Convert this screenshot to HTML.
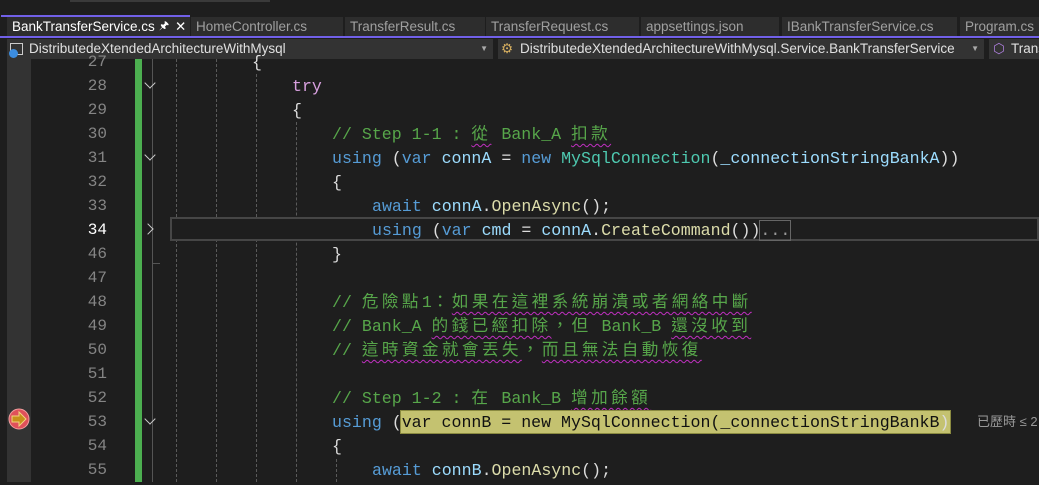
<!DOCTYPE html>
<html><head><meta charset="utf-8"><style>
*{margin:0;padding:0;box-sizing:border-box}
body{width:1039px;height:482px;background:#1e1e1e;overflow:hidden;position:relative;font-family:"Liberation Sans","Noto Sans CJK TC",sans-serif}
.tab{position:absolute;top:17px;height:19px;background:#2d2d2d;color:#a0a0a0;font-size:13.5px;line-height:19px;padding-left:5px;white-space:nowrap;overflow:hidden}
.nav{position:absolute;top:39px;height:20px;background:#333;color:#e0e0e0;font-size:13.5px;line-height:20px;white-space:nowrap;overflow:hidden}
.ln{position:absolute;left:40px;width:67px;text-align:right;color:#858585;font:16px "Liberation Mono",monospace;height:24px;line-height:24px}
.cd{position:absolute;height:24px;line-height:24px;margin-top:3px;font:16.6px "Liberation Mono","Noto Sans CJK TC",monospace;white-space:pre;color:#dcdcdc}
.cd span{line-height:0}
.k{color:#569cd6}.p{color:#d8a0df}.v{color:#9cdcfe}.m{color:#dcdcaa}.t{color:#4ec9b0}.c{color:#57a64a}
.j{letter-spacing:3.4px}
.w{text-decoration:underline wavy #c030c0;text-decoration-thickness:1px;text-underline-offset:4px}
.g{position:absolute;top:59px;bottom:0;border-left:1px dashed #5a5a5a}
.f{position:absolute;left:146px;width:8px;height:8px;border-right:1.5px solid #ccc;border-bottom:1.5px solid #ccc}
</style></head><body>
<div style="position:absolute;left:70px;top:0;width:200px;height:2px;background:#3a3a3a"></div>
<div style="position:absolute;left:1px;top:15px;width:189px;height:2px;background:#7160e8"></div>
<div style="position:absolute;left:0;top:36px;width:1039px;height:2px;background:#7160e8"></div>
<div class="tab" style="left:7px;width:183px;color:#fff;background:#2d2d2d">BankTransferService.cs<span style="position:absolute;left:152px;font-size:11px">&#x1F588;</span><span style="position:absolute;left:168px">✕</span></div>
<div class="tab" style="left:191px;width:152px">HomeController.cs</div>
<div class="tab" style="left:345px;width:140px">TransferResult.cs</div>
<div class="tab" style="left:486px;width:153px">TransferRequest.cs</div>
<div class="tab" style="left:641px;width:138px">appsettings.json</div>
<div class="tab" style="left:782px;width:175px">IBankTransferService.cs</div>
<div class="tab" style="left:960px;width:79px">Program.cs</div>
<div class="nav" style="left:7px;width:486px;padding-left:22px"><span style="position:absolute;left:3px;top:4px;width:13px;height:12px;border:1px solid #ccc"></span><span style="position:absolute;left:2px;top:10px;width:9px;height:9px;border-radius:50%;background:#3c8de0"></span>DistributedeXtendedArchitectureWithMysql<span style="position:absolute;right:5px;font-size:8px;color:#aaa">▼</span></div>
<div class="nav" style="left:498px;width:486px;padding-left:22px"><span style="position:absolute;left:3px;color:#d8b060">⚙</span>DistributedeXtendedArchitectureWithMysql.Service.BankTransferService<span style="position:absolute;right:5px;font-size:8px;color:#aaa">▼</span></div>
<div class="nav" style="left:989px;width:50px;padding-left:22px"><span style="position:absolute;left:4px;color:#b080e0">⬡</span>Trans</div>
<div style="position:absolute;left:7px;top:59px;width:24px;bottom:0;background:#333"></div>
<div style="position:absolute;left:135px;top:59px;width:7px;bottom:0;background:#4caf50"></div>
<div style="position:absolute;left:152px;top:59px;width:1px;bottom:0;background:#555"></div>
<div class="g" style="left:176px"></div><div class="g" style="left:216px"></div><div class="g" style="left:256px;top:74px"></div><div class="g" style="left:296px;top:122px"></div><div class="g" style="left:336px;top:459px"></div>
<div style="position:absolute;left:170px;top:217px;width:869px;height:24px;border:2px solid #464646;background:#1e1e1e"></div>
<div style="position:absolute;left:152px;top:263px;width:8px;height:1px;background:#555"></div>
<div style="position:absolute;left:0;top:59px;width:1039px">
<div class="ln" style="top:-9px">27</div><div class="cd" style="top:-9px;left:252px">{</div>
<div class="ln" style="top:15px">28</div><div class="f" style="top:20px;transform:rotate(45deg)"></div><div class="cd p" style="top:15px;left:292px">try</div>
<div class="ln" style="top:39px">29</div><div class="cd" style="top:39px;left:292px">{</div>
<div class="ln" style="top:63px">30</div><div class="cd c" style="top:63px;left:332px">// Step 1-1 : <span class="j w">從</span> Bank_A <span class="j w">扣款</span></div>
<div class="ln" style="top:87px">31</div><div class="f" style="top:92px;transform:rotate(45deg)"></div><div class="cd" style="top:87px;left:332px"><span class="k">using</span> (<span class="k">var</span> <span class="v">connA</span> = <span class="k">new</span> <span class="t">MySqlConnection</span>(<span class="v">_connectionStringBankA</span>))</div>
<div class="ln" style="top:111px">32</div><div class="cd" style="top:111px;left:332px">{</div>
<div class="ln" style="top:135px">33</div><div class="cd" style="top:135px;left:372px"><span class="k">await</span> <span class="v">connA</span>.<span class="m">OpenAsync</span>();</div>
<div class="ln" style="top:159px;color:#fff">34</div><div class="f" style="top:166px;left:144px;transform:rotate(-45deg)"></div><div class="cd" style="top:159px;left:372px"><span class="k">using</span> (<span class="k">var</span> <span class="v">cmd</span> = <span class="v">connA</span>.<span class="m">CreateCommand</span>())<span style="outline:1px solid #666;color:#999">...</span></div>
<div class="ln" style="top:183px">46</div><div class="cd" style="top:183px;left:332px">}</div>
<div class="ln" style="top:207px">47</div>
<div class="ln" style="top:231px">48</div><div class="cd c" style="top:231px;left:332px">// <span class="j">危險點</span>1<span class="j">：</span><span class="j w">如果在這裡系統崩潰或者網絡中斷</span></div>
<div class="ln" style="top:255px">49</div><div class="cd c" style="top:255px;left:332px">// Bank_A <span class="j w">的錢已經扣除</span><span class="j">，但</span> Bank_B <span class="j w">還沒收到</span></div>
<div class="ln" style="top:279px">50</div><div class="cd c" style="top:279px;left:332px">// <span class="j w">這時資金就會丟失</span><span class="j">，</span><span class="j w">而且無法自動恢復</span></div>
<div class="ln" style="top:303px">51</div>
<div class="ln" style="top:327px">52</div><div class="cd c" style="top:327px;left:332px">// Step 1-2 : <span class="j">在</span> Bank_B <span class="j w">增加餘額</span></div>
<div class="ln" style="top:351px">53</div><div class="f" style="top:356px;transform:rotate(45deg)"></div>
<div style="position:absolute;top:352px;left:401px;width:549px;height:22px;background:#c4c270;outline:1px solid #8a8a40"></div>
<div class="cd" style="top:351px;left:332px"><span class="k">using</span> (<span style="color:#111">var connB = new MySqlConnection(_connectionStringBankB</span>)</div>
<div style="position:absolute;top:351px;left:977px;line-height:24px;font-size:13px;color:#999;white-space:nowrap">已歷時 ≤ 2</div>
<div class="ln" style="top:375px">54</div><div class="cd" style="top:375px;left:332px">{</div>
<div class="ln" style="top:399px">55</div><div class="cd" style="top:399px;left:372px"><span class="k">await</span> <span class="v">connB</span>.<span class="m">OpenAsync</span>();</div>
</div>
<svg style="position:absolute;left:8px;top:408px" width="22" height="22" viewBox="0 0 22 22"><circle cx="11" cy="11" r="10" fill="#e0505a" stroke="#f0a0a0"/><path d="M4 8h7V4l7 7-7 7v-4H4z" fill="#c8901a" stroke="#f4d080" stroke-width="1"/></svg>
</body></html>
